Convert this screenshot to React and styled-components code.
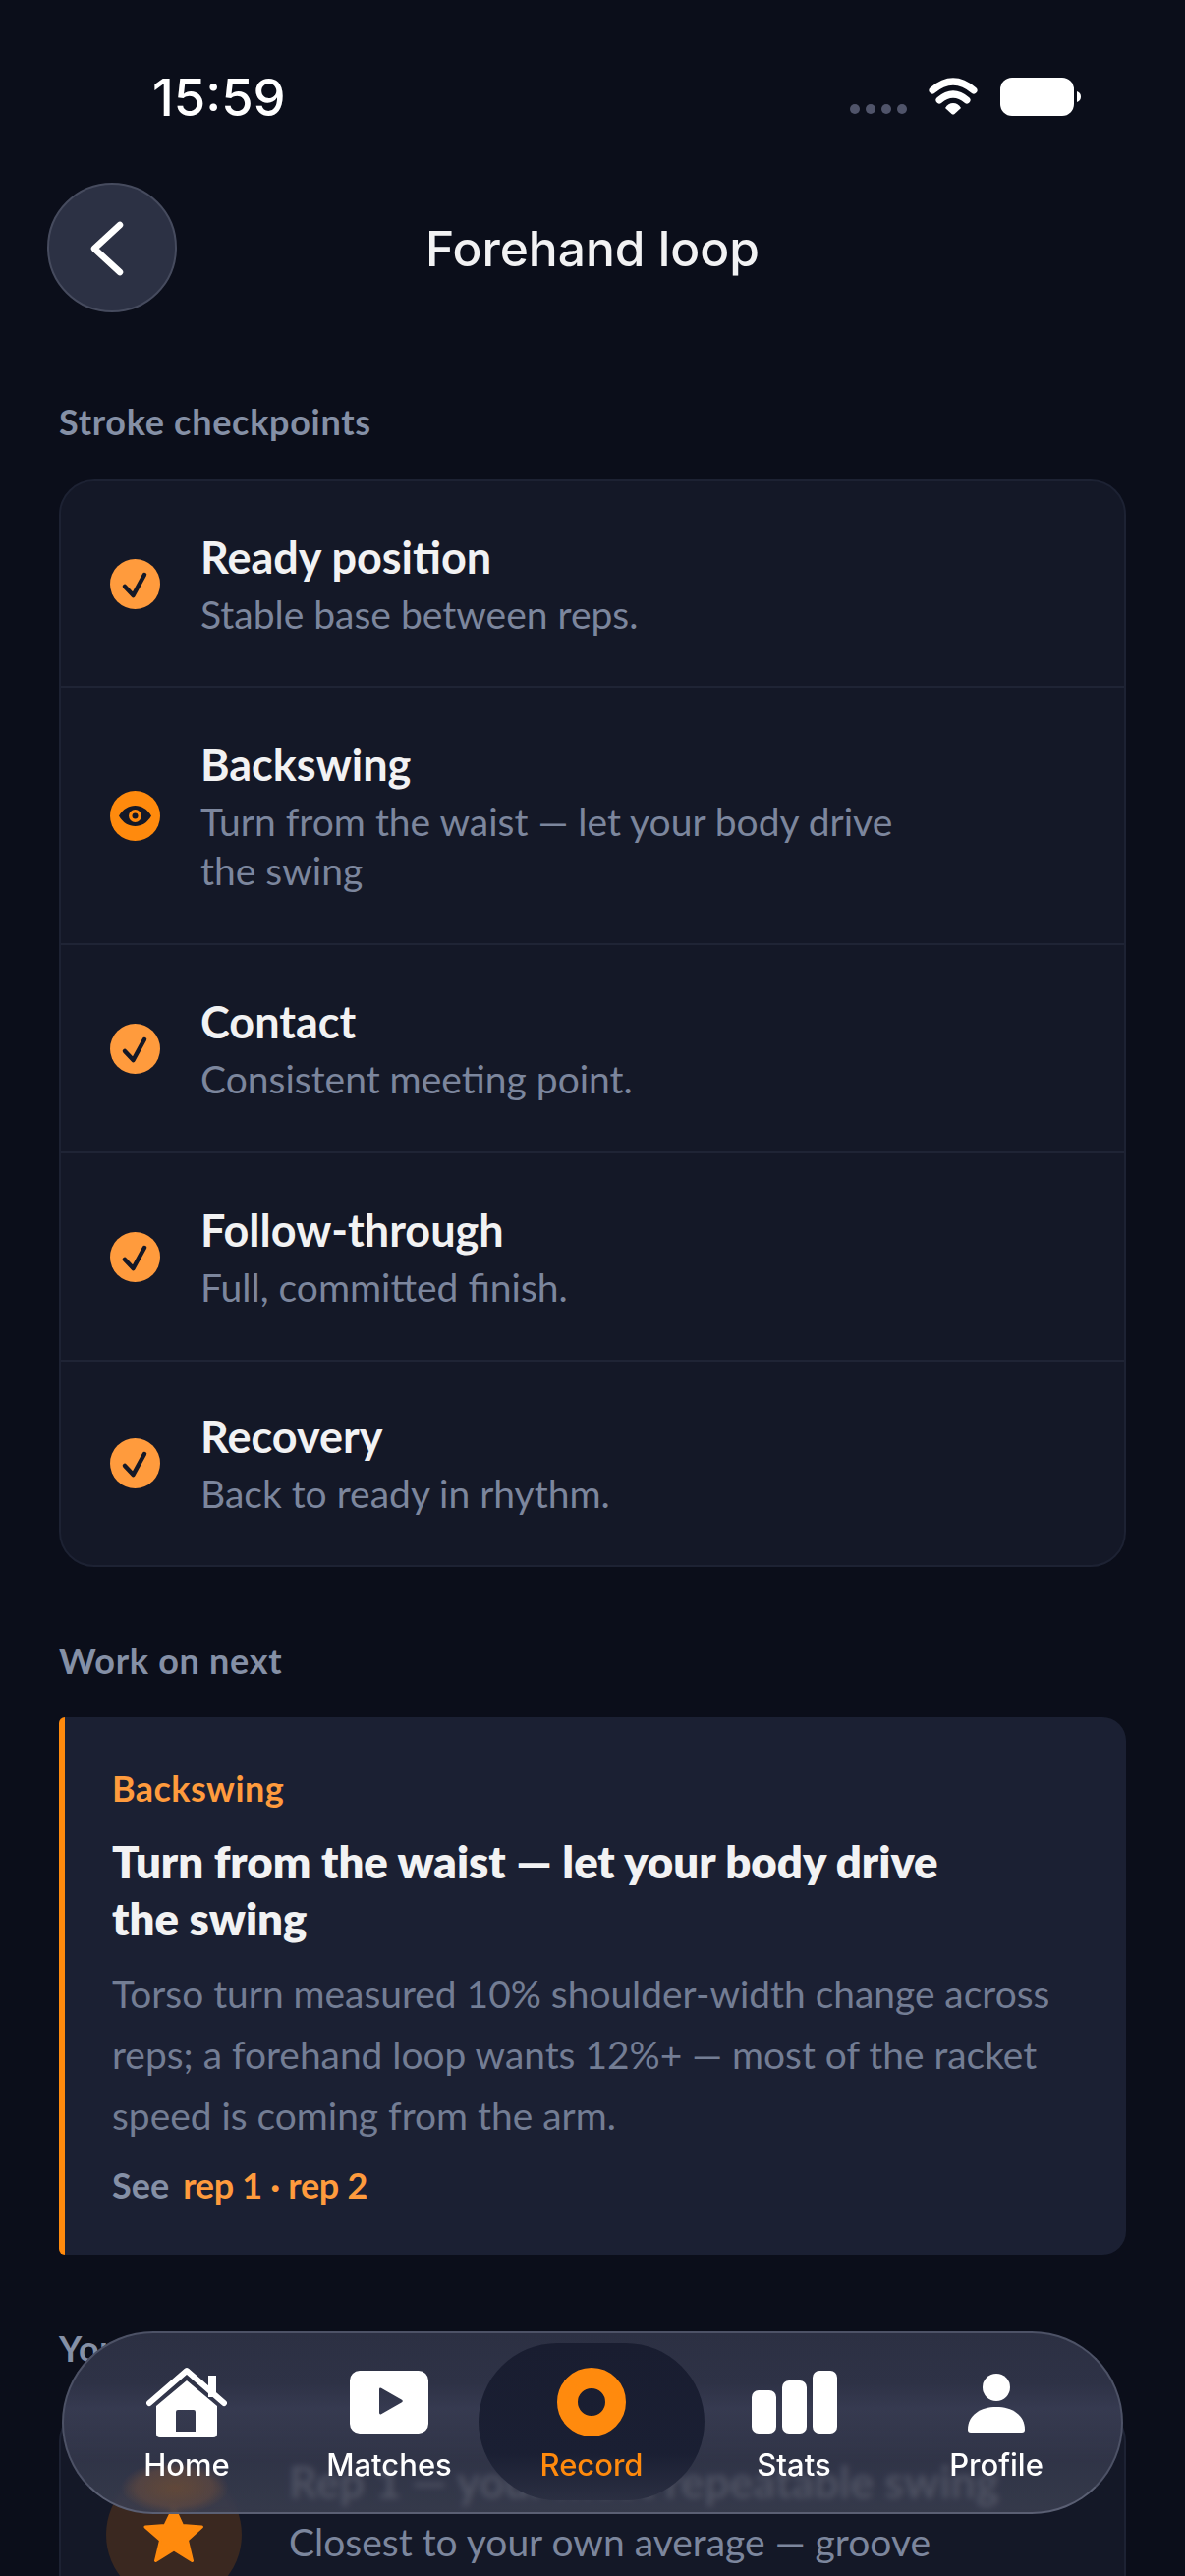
import React from 'react';
import styled, { createGlobalStyle } from 'styled-components';

const Global = createGlobalStyle`
  html, body { margin: 0; padding: 0; background: #0b0e1a; }
  body { width: 1206px; height: 2622px; overflow: hidden; }
  #root { width: 1206px; height: 2622px; }
`;
const body = `'Lato', 'Noto Sans', sans-serif`;
const ui = `'Inter', 'Liberation Sans', sans-serif`;

const Screen = styled.div`
  position: relative; width: 1206px; height: 2622px; overflow: hidden;
  background: #0b0e1a; font-family: ${body}; color: #f2f2f3;
`;
const StatusBar = styled.div`
  height: 186px; padding: 70px 105px 0 155px; box-sizing: border-box;
  display: flex; justify-content: space-between; align-items: flex-start;
`;
const Time = styled.div`font: 500 52.5px/58px ${ui}; color: #fff;`;
const StatusIcons = styled.div`display: flex; align-items: flex-start; padding-top: 8px;`;
const Header = styled.header`
  position: relative; height: 132px; display: flex; align-items: center; justify-content: center;
`;
const BackButton = styled.button`
  position: absolute; left: 48px; top: 0; width: 132px; height: 132px; border-radius: 50%;
  background: #2c3144; border: 2px solid #464b5e; box-sizing: border-box; padding: 0;
  display: flex; align-items: center; justify-content: center;
`;
const Title = styled.h1`margin: 0; font: 500 49.7px/56px ${ui}; color: #f2f2f3; position: relative; top: 1px;`;
const Main = styled.main`padding: 0 60px; display: flex; flex-direction: column;`;
const SectionLabel = styled.h2`
  margin: 0; font: 700 36px/42px ${body}; letter-spacing: 0.7px; color: #8590a6; height: 42px;
`;
const Card = styled.section`
  margin-top: 38px; background: #141827; border: 2px solid #1d2233; border-radius: 36px; box-sizing: border-box;
  display: flex; flex-direction: column;
`;
const Row = styled.div`
  display: flex; align-items: center; gap: 41px; padding: 0 50px;
  height: ${p => p.$h}px; box-sizing: border-box;
  & + & { border-top: 2px solid #1f2435; }
`;
const Status = styled.div`width: 51px; height: 51px; flex: none;`;
const RowText = styled.div`display: flex; flex-direction: column; padding-top: 3px;`;
const RowTitle = styled.div`font: 700 45px/50px ${body}; color: #f2f2f3;`;
const RowSub = styled.div`margin-top: 8px; font: 400 39px/50px ${body}; color: #7c869d; max-width: 760px;`;
const Gap = styled.div`height: ${p => p.$h}px;`;
const NextCard = styled.section`
  margin-top: 37px; height: 547px; background: #1b2033; border-left: 6px solid #ff8a0d;
  border-radius: 6px 24px 24px 6px; box-sizing: border-box; padding: 50px 50px 0 48px;
`;
const Eyebrow = styled.div`font: 700 36px/44px ${body}; letter-spacing: 0.4px; color: #ff9b3d;`;
const NextTitle = styled.div`margin-top: 24px; font: 800 45.500px/58px ${body}; color: #f2f2f3; max-width: 860px;`;
const NextBody = styled.p`margin: 16px 0 0; font: 400 38.900px/62px ${body}; color: #737d94;`;
const SeeRow = styled.div`margin-top: 18px; font: 700 36px/44px ${body}; color: #8590a6; display: flex; gap: 14px;`;
const RepLink = styled.span`color: #ff9b3d; letter-spacing: -0.3px;`;
const InsightCard = styled(Card)`
  height: 290px; flex-direction: row; align-items: flex-start; padding: 46px 50px 0 46px; gap: 48px;
`;
const Medal = styled.div`
  width: 138px; height: 138px; margin-top: 14px; border-radius: 50%; background: #3a2820; flex: none;
  display: flex; align-items: center; justify-content: center;
`;
const InsightText = styled.div`display: flex; flex-direction: column;`;
const InsightTitle = styled.div`font: 700 45px/58px ${body}; color: #f2f2f3;`;
const InsightSub = styled.div`margin-top: 7px; font: 400 39px/50px ${body}; color: #7c869d; max-width: 720px;`;
const NavBar = styled.nav`
  position: absolute; left: 63px; top: 2373px; width: 1080px; height: 186px; border-radius: 93px;
  box-sizing: border-box; border: 2px solid #4d5266; border-bottom-color: #5a5f73;
  background: linear-gradient(180deg, rgb(44,48,67) 0%, rgb(46,50,70) 28%, rgb(54,58,80) 42%, rgba(52,56,76,.97) 60%, rgba(52,56,76,.88) 72%, rgba(58,62,80,.88) 100%);
  backdrop-filter: blur(3px);
  display: grid; grid-template-columns: repeat(5, 1fr); padding: 0 24px 0 22px;
`;
const NavGlow = styled.div`
  position: absolute; left: 58px; top: 130px; width: 110px; height: 54px; border-radius: 50%;
  background: radial-gradient(closest-side, rgba(120,80,50,.65) 0%, rgba(110,78,60,.5) 70%, rgba(110,78,60,0) 100%);
`;
const NavItem = styled.div`
  position: relative; display: flex; flex-direction: column; align-items: center;
  color: ${p => p.$active ? '#ff8a0d' : '#fff'};
`;
const NavPill = styled.div`
  position: absolute; left: -12px; right: -12px; top: 10px; height: 160px; border-radius: 80px;
  background: linear-gradient(180deg, #191d30 0%, #1a1f33 70%, #2b2f42 100%);
`;
const NavIcon = styled.div`
  position: relative; height: 116px; box-sizing: border-box; padding-top: ${p => p.$top}px;
  display: flex; align-items: flex-start; justify-content: center;
`;
const NavLabel = styled.div`position: relative; font: 500 31px/36px ${ui};`;

const Check = () => (
  <svg width="51" height="51" viewBox="0 0 51 51"><circle cx="25.500" cy="25.500" r="25.500" fill="#ff9b3d"/><path d="M15 28l8.500 9L35 16" fill="none" stroke="#141827" strokeWidth="4.500" strokeLinecap="round" strokeLinejoin="round"/></svg>
);
const Eye = () => (
  <svg width="51" height="51" viewBox="0 0 51 51"><circle cx="25.500" cy="25.500" r="25.500" fill="#ff8a0d"/><path d="M9 25.500c4-7 10-10.500 16.500-10.500S38 18.500 42 25.500C38 32.500 32 36 25.500 36S13 32.500 9 25.500z" fill="#141827"/><circle cx="25.500" cy="25.500" r="6.500" fill="#ff8a0d"/><circle cx="25.500" cy="25.500" r="3" fill="#141827"/></svg>
);

const rows = [
  ['Ready position', 'Stable base between reps.', 208, <Check />],
  ['Backswing', 'Turn from the waist — let your body drive the swing', 262, <Eye />],
  ['Contact', 'Consistent meeting point.', 212, <Check />],
  ['Follow-through', 'Full, committed finish.', 212, <Check />],
  ['Recovery', 'Back to ready in rhythm.', 209, <Check />],
];

export default function App() {
  return (
    <Screen>
      <Global />
      <StatusBar>
        <Time>15:59</Time>
        <StatusIcons>
          <svg width="236" height="52" viewBox="0 0 236 52">
            <g fill="#50546a"><circle cx="5" cy="33" r="5"/><circle cx="21" cy="33" r="5"/><circle cx="37" cy="33" r="5"/><circle cx="53" cy="33" r="5"/></g>
            <path d="M84 14Q105 -4 126 14" fill="none" stroke="#fff" strokeWidth="7" strokeLinecap="round"/>
            <path d="M91 24Q105 12 119 24" fill="none" stroke="#fff" strokeWidth="7" strokeLinecap="round"/>
            <path d="M105 27Q110 27 113 32L106.500 38Q105 39 103.500 38L97 32Q100 27 105 27z" fill="#fff"/>
            <rect x="153" y="1" width="75" height="39" rx="12" fill="#fff"/>
            <path d="M231 15c3 1 4 3 4 5.500s-1 4.500-4 5.500z" fill="#fff"/>
          </svg>
        </StatusIcons>
      </StatusBar>
      <Header>
        <BackButton aria-label="Back">
          <svg width="46" height="66" viewBox="0 0 46 66"><path d="M31 10L5 34l26 24" fill="none" stroke="#fff" strokeWidth="6.500" strokeLinecap="round" strokeLinejoin="round"/></svg>
        </BackButton>
        <Title>Forehand loop</Title>
      </Header>
      <Main>
        <Gap $h={90} />
        <SectionLabel>Stroke checkpoints</SectionLabel>
        <Card>
          {rows.map(([t, s, h, icon]) => (
            <Row key={t} $h={h}>
              <Status>{icon}</Status>
              <RowText><RowTitle>{t}</RowTitle><RowSub>{s}</RowSub></RowText>
            </Row>
          ))}
        </Card>
        <Gap $h={74} />
        <SectionLabel>Work on next</SectionLabel>
        <NextCard>
          <Eyebrow>Backswing</Eyebrow>
          <NextTitle>Turn from the waist — let your body drive the swing</NextTitle>
          <NextBody>Torso turn measured 10% shoulder-width change across reps; a forehand loop wants 12%+ — most of the racket speed is coming from the arm.</NextBody>
          <SeeRow>See <RepLink>rep 1 · rep 2</RepLink></SeeRow>
        </NextCard>
        <Gap $h={74} />
        <SectionLabel>Your best rep</SectionLabel>
        <InsightCard>
          <Medal>
            <svg width="62" height="60" viewBox="0 0 62 60"><path d="M31 2l8.500 18.500 20 1.500-15 13.500 5 21L31 45 12.500 56.500l5-21L2 22l20-1.500z" fill="#ff8a0d" stroke="#ff8a0d" strokeWidth="3" strokeLinejoin="round"/></svg>
          </Medal>
          <InsightText>
            <InsightTitle>Rep 1 — your most repeatable swing</InsightTitle>
            <InsightSub>Closest to your own average — groove this one.</InsightSub>
          </InsightText>
        </InsightCard>
      </Main>
      <NavBar>
        <NavGlow />
        <NavItem>
          <NavIcon $top={34}><svg width="82" height="73" viewBox="0 0 82 73"><path d="M3 37L41 4l38 33" fill="none" stroke="#fff" strokeWidth="6" strokeLinecap="round" strokeLinejoin="round"/><rect x="63" y="9" width="8" height="22" fill="#fff"/><path fillRule="evenodd" d="M41 14l31 26v28a4 4 0 0 1-4 4H14a4 4 0 0 1-4-4V40zM32 44a2 2 0 0 0-2 2v20h20V46a2 2 0 0 0-2-2z" fill="#fff"/></svg></NavIcon>
          <NavLabel>Home</NavLabel>
        </NavItem>
        <NavItem>
          <NavIcon $top={38}><svg width="80" height="64" viewBox="0 0 80 64"><path fillRule="evenodd" d="M10 0h60a10 10 0 0 1 10 10v44a10 10 0 0 1-10 10H10A10 10 0 0 1 0 54V10A10 10 0 0 1 10 0zM30 19v24a1.500 1.500 0 0 0 2 1.300l21-12a1.500 1.500 0 0 0 0-2.600l-21-12a1.500 1.500 0 0 0-2 1.300z" fill="#fff"/></svg></NavIcon>
          <NavLabel>Matches</NavLabel>
        </NavItem>
        <NavItem $active>
          <NavPill />
          <NavIcon $top={35}><svg width="70" height="70" viewBox="0 0 70 70"><circle cx="35" cy="35" r="24.500" fill="none" stroke="#ff8a0d" strokeWidth="21"/></svg></NavIcon>
          <NavLabel>Record</NavLabel>
        </NavItem>
        <NavItem>
          <NavIcon $top={38}><svg width="87" height="64" viewBox="0 0 87 64"><rect x="0" y="20" width="25" height="44" rx="7" fill="#fff"/><rect x="31" y="10" width="25" height="54" rx="7" fill="#fff"/><rect x="62" y="0" width="25" height="64" rx="7" fill="#fff"/></svg></NavIcon>
          <NavLabel>Stats</NavLabel>
        </NavItem>
        <NavItem>
          <NavIcon $top={40}><svg width="58" height="62" viewBox="0 0 58 62"><circle cx="29" cy="15" r="14" fill="#fff"/><path d="M0 58c0-15 13-23 29-23s29 8 29 23a3 3 0 0 1-3 3H3a3 3 0 0 1-3-3z" fill="#fff"/></svg></NavIcon>
          <NavLabel>Profile</NavLabel>
        </NavItem>
      </NavBar>
    </Screen>
  );
}
